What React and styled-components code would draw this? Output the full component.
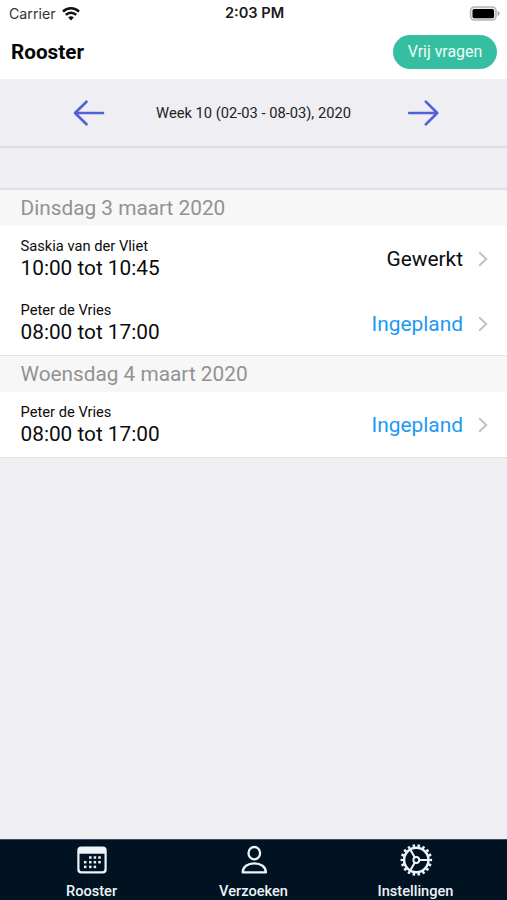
import React from "react";
import styled, { createGlobalStyle } from "styled-components";

const GlobalStyle = createGlobalStyle`
  * {
    box-sizing: border-box;
  }
  body {
    margin: 0;
    background-color: #efeef3;
    font-family: Roboto, "Liberation Sans", sans-serif;
  }
`;

const Screen = styled.div`
  display: flex;
  flex-direction: column;
  width: 100%;
  height: 900px;
  overflow: hidden;
  background-color: #efeef3;
  color: #0c0c0c;
`;

const StatusBar = styled.div`
  display: grid;
  grid-template-columns: 1fr auto 1fr;
  align-items: center;
  height: 27px;
  padding: 0 7px 0 9px;
  background-color: #fff;
  font-family: Inter, sans-serif;
  font-size: 14.2px;
  line-height: 27px;
`;
const Carrier = styled.div`
  display: flex;
  align-items: center;
  gap: 6px;
  color: #333;
`;
const Clock = styled.div`
  font-size: 14.6px;
  font-weight: 600;
  color: #1a1a1a;
`;
const Battery = styled.div`
  display: flex;
  justify-content: flex-end;
`;

const Header = styled.header`
  display: flex;
  align-items: center;
  justify-content: space-between;
  height: 53px;
  padding: 0 10px 3px 11px;
  background-color: #fff;
  border-bottom: 1px solid #f1f1f4;
`;
const Title = styled.h1`
  margin: 0;
  font-size: 20.7px;
  font-weight: 700;
  color: #050505;
`;
const RequestButton = styled.button`
  width: 104px;
  height: 34px;
  padding: 0;
  border: none;
  border-radius: 17px;
  background-color: #35bfa0;
  color: #eefffb;
  font-family: inherit;
  font-size: 15.9px;
`;

const WeekBar = styled.div`
  display: flex;
  align-items: center;
  justify-content: space-between;
  height: 68px;
  padding: 0 68px 0 73px;
  border-bottom: 2px solid #dedee2;
`;
const WeekLabel = styled.div`
  margin-right: 5px;
  font-size: 14.7px;
  color: #222;
`;

const Spacer = styled.div`
  height: 42px;
  border-bottom: 2px solid #e0e0e4;
`;

const SectionTitle = styled.h2`
  height: 36px;
  margin: 0;
  padding-left: 20.5px;
  background-color: #f7f7f7;
  color: #929292;
  font-size: 20.8px;
  font-weight: 400;
  line-height: 36px;
`;
const Section = styled.section`
  border-bottom: 1px solid #e3e3e5;
`;
const ShiftRow = styled.div`
  display: flex;
  align-items: center;
  justify-content: space-between;
  height: ${(props) => props.$height || 64.5}px;
  padding: 1.5px 19px 0 20.5px;
  background-color: #fff;
`;
const Employee = styled.div`
  font-size: 14.7px;
  line-height: 18px;
`;
const Hours = styled.div`
  font-size: 20.8px;
  line-height: 27px;
`;
const Status = styled.div`
  display: flex;
  align-items: center;
  gap: 15px;
  font-size: 20.9px;
  color: ${(props) => (props.$planned ? "#1c99f3" : "#0c0c0c")};
`;

const TabBar = styled.nav`
  display: grid;
  grid-template-columns: repeat(3, 162px);
  justify-content: center;
  height: 61px;
  margin-top: auto;
  background-color: #011222;
  border-top: 1px solid #414854;
`;
const Tab = styled.div`
  display: flex;
  flex-direction: column;
  align-items: center;
  padding-top: 3.3px;
  color: #edf4f8;
  font-size: 14.6px;
  font-weight: 500;
  line-height: 16px;
`;
const TabIcon = styled.svg`
  display: block;
  flex: none;
  width: 34px;
  height: 34px;
  margin-bottom: 6px;
`;

const WifiIcon = () => (
  <svg width="18" height="14" viewBox="0 0 18 14" fill="none" stroke="#111">
    <path d="M1 4.600a11.300 11.300 0 0 1 16 0" strokeWidth="2.500" />
    <path d="M3.800 7.900a7.300 7.300 0 0 1 10.400 0" strokeWidth="2.400" />
    <path d="M9 13.400 6.200 10.500a4 4 0 0 1 5.600 0z" fill="#111" stroke="none" />
  </svg>
);

const BatteryIcon = () => (
  <svg width="31" height="16" viewBox="0 0 31 16">
    <rect x="1.500" y="0.900" width="25.600" height="13.200" rx="4" fill="#eee" stroke="#b5b5b5" strokeWidth="1.500" />
    <rect x="3.500" y="2.900" width="21.600" height="9.400" rx="1.800" fill="#000" />
    <path d="M28.700 5v5c1.700-.7 2-1.600 2-2.500s-.3-1.800-2-2.500z" fill="#aaa" />
  </svg>
);

const Arrow = ({ right }) => (
  <svg width="32" height="28" viewBox="0 0 32 28" fill="none" stroke="#5260d8" strokeWidth="2.6" strokeLinecap="round" strokeLinejoin="round">
    {right ? (
      <path d="M2.200 14h28M18.800 2.700 30.200 14 18.800 25.300" />
    ) : (
      <path d="M30 14H2M13.500 2.700 2 14l11.500 11.300" />
    )}
  </svg>
);

const Chevron = () => (
  <svg width="10" height="16" viewBox="0 0 10 16" fill="none" stroke="#c4c4c6" strokeWidth="2.2">
    <path d="M1.2 1.2 8.2 8l-7 6.8" />
  </svg>
);

const dots = [
  [15.3, 14.5], [19.9, 14.5], [24.5, 14.5],
  [10.2, 19.2], [15.3, 19.2], [19.9, 19.2], [24.5, 19.2],
  [10.2, 23.9], [15.3, 23.9], [19.9, 23.9],
];

const CalendarIcon = () => (
  <TabIcon viewBox="0 0 34 34" fill="currentColor">
    <path
      fillRule="evenodd"
      d="M6.300 3.500h21.400a4 4 0 0 1 4 4v18.900a4 4 0 0 1-4 4H6.300a4 4 0 0 1-4-4V7.500a4 4 0 0 1 4-4zM4.500 10.700v15.300a2.200 2.200 0 0 0 2.200 2.200h20.600a2.200 2.200 0 0 0 2.200-2.200V10.700z"
    />
    {dots.map(([x, y]) => (
      <rect key={`${x}-${y}`} x={x - 1.25} y={y - 1.25} width="2.5" height="2.5" />
    ))}
  </TabIcon>
);

const PersonIcon = () => (
  <TabIcon viewBox="0 0 34 34" fill="none" stroke="currentColor" strokeWidth="2.3" strokeLinejoin="round">
    <ellipse cx="17.300" cy="10.200" rx="5.800" ry="6.200" />
    <path d="M5.700 29.400c0-5.800 5.200-9 11.600-9s11.600 3.200 11.600 9z" />
  </TabIcon>
);

const GearIcon = () => (
  <TabIcon viewBox="0 0 34 34" fill="none" stroke="currentColor">
    <circle cx="17.300" cy="17" r="12.200" strokeWidth="2.500" />
    <circle cx="17.300" cy="17" r="14.400" strokeWidth="2.800" pathLength="72" strokeDasharray="2 2" strokeDashoffset="1" />
    <circle cx="17.300" cy="17" r="2.900" strokeWidth="2" />
    <path d="M20.300 17h9M15.800 14.400 11.300 6.600M15.800 19.600 11.300 27.400" strokeWidth="2.100" />
  </TabIcon>
);

const Shift = ({ name, hours, status, planned, height }) => (
  <ShiftRow $height={height}>
    <div>
      <Employee>{name}</Employee>
      <Hours>{hours}</Hours>
    </div>
    <Status $planned={planned}>
      {status}
      <Chevron />
    </Status>
  </ShiftRow>
);

const App = () => {
  return (
    <Screen>
      <GlobalStyle />
      <StatusBar>
        <Carrier>
          Carrier
          <WifiIcon />
        </Carrier>
        <Clock>2:03 PM</Clock>
        <Battery>
          <BatteryIcon />
        </Battery>
      </StatusBar>
      <Header>
        <Title>Rooster</Title>
        <RequestButton>Vrij vragen</RequestButton>
      </Header>
      <WeekBar>
        <Arrow />
        <WeekLabel>Week 10 (02-03 - 08-03), 2020</WeekLabel>
        <Arrow right />
      </WeekBar>
      <Spacer />
      <Section>
        <SectionTitle>Dinsdag 3 maart 2020</SectionTitle>
        <Shift name="Saskia van der Vliet" hours="10:00 tot 10:45" status="Gewerkt" />
        <Shift name="Peter de Vries" hours="08:00 tot 17:00" status="Ingepland" planned />
      </Section>
      <Section>
        <SectionTitle>Woensdag 4 maart 2020</SectionTitle>
        <Shift name="Peter de Vries" hours="08:00 tot 17:00" status="Ingepland" planned height={65} />
      </Section>
      <TabBar>
        <Tab>
          <CalendarIcon />
          Rooster
        </Tab>
        <Tab>
          <PersonIcon />
          Verzoeken
        </Tab>
        <Tab>
          <GearIcon />
          Instellingen
        </Tab>
      </TabBar>
    </Screen>
  );
};

export default App;
